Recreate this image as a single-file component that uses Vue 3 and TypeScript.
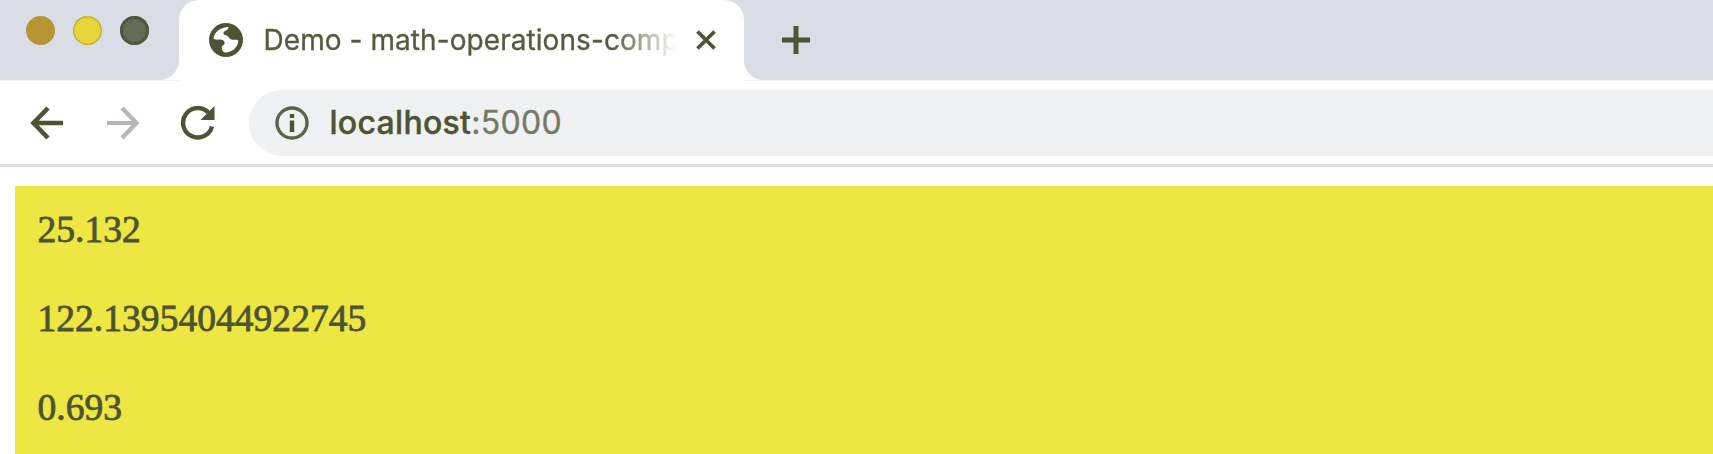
<script setup lang="ts">
const results: string[] = ['25.132', '122.13954044922745', '0.693']
const lights: string[] = ['close', 'minimize', 'zoom']
</script>

<template>
  <div class="browser">
    <header class="tab-strip">
      <div class="lights">
        <i v-for="light in lights" :key="light" class="light" :class="light"></i>
      </div>
      <div class="tab">
        <svg class="globe" viewBox="0 0 34 34">
          <circle cx="17" cy="17" r="17" fill="#4c5432" />
          <path d="M19.500 4C12 4 5 9 4.500 15.500C6.500 17.500 9 16.200 11.500 16.500C14.500 17 16 18 15.500 20.500C15 22.500 12.500 22.500 12.800 24.500C13.200 27 13.500 29.500 17 29.500C23 29 28 25.500 29.500 18C28.500 15.800 26 17 23.500 16.800C20.500 16.500 20 13.500 17.500 12.500C15.500 11.500 14 11.500 14.500 9.500C15.500 7 19.500 8 19.500 4Z" fill="#fff" />
        </svg>
        <span class="title">Demo - math-operations-comp</span>
        <svg class="close-tab" viewBox="0 0 20 20">
          <path d="M1.500 1.500L18.500 18.500M18.500 1.500L1.500 18.500" fill="none" stroke="#4c5432" stroke-width="3.800" />
        </svg>
      </div>
      <svg class="new-tab" viewBox="0 0 30 30">
        <path d="M15 1V29M1 15H29" fill="none" stroke="#4c5432" stroke-width="5" />
      </svg>
    </header>
    <nav class="toolbar">
      <svg class="nav-icon back" viewBox="0 0 34 34">
        <path d="M33 17H4M18 2L3.500 17L18 32" fill="none" stroke="#4c5432" stroke-width="4.600" />
      </svg>
      <svg class="nav-icon forward" viewBox="0 0 34 34">
        <path d="M1 17H30M16 2L30.500 17L16 32" fill="none" stroke="#b4b6be" stroke-width="4.200" />
      </svg>
      <svg class="nav-icon reload" viewBox="0 0 34 34">
        <path d="M31 20.500A14.700 14.700 0 1 1 27.400 6.600" fill="none" stroke="#4c5432" stroke-width="4.400" />
        <path d="M33.500 0V14H19.500Z" fill="#4c5432" />
      </svg>
      <div class="address">
        <svg class="info" viewBox="0 0 34 34">
          <circle cx="17" cy="17" r="15" fill="none" stroke="#5c634a" stroke-width="3.400" />
          <path d="M17 8V12M17 14.500V26" fill="none" stroke="#4c5432" stroke-width="4.400" />
        </svg>
        <span class="url"><span class="host">localhost</span><span class="port">:5000</span></span>
      </div>
    </nav>
    <main class="page">
      <section class="results">
        <p v-for="result in results" :key="result">{{ result }}</p>
      </section>
    </main>
  </div>
</template>

<style>
body {
  margin: 0;
  overflow: hidden;
}
</style>

<style scoped>
.browser {
  width: 1713px;
  height: 454px;
  overflow: hidden;
  background: #fff;
  display: flex;
  flex-direction: column;
}
.tab-strip {
  flex: none;
  display: flex;
  height: 80px;
  background: #dadde6;
  border-bottom: 1px solid #f1f3f5;
}
.lights {
  display: flex;
  gap: 18px;
  width: 153.5px;
  padding: 16px 0 0 25.5px;
}
.light {
  width: 29px;
  height: 29px;
  border-radius: 50%;
}
.close {
  background: #b69535;
}
.minimize {
  background: #e4d63b;
  box-shadow: inset 0 0 0 1.5px #c9b136;
}
.zoom {
  background: #636a55;
  box-shadow: inset 0 0 0 3px #50583b;
}
.tab {
  position: relative;
  flex: none;
  display: flex;
  align-items: center;
  box-sizing: border-box;
  width: 564.5px;
  height: 81px;
  padding: 0 0 1px 30px;
  border-radius: 20px 20px 0 0;
  background: #fff;
}
.tab::before,
.tab::after {
  content: '';
  position: absolute;
  bottom: 1px;
  width: 20px;
  height: 20px;
}
.tab::before {
  left: -20px;
  background: radial-gradient(circle at 0 0, transparent 19.5px, #fff 20.5px);
}
.tab::after {
  right: -20px;
  background: radial-gradient(circle at 100% 0, transparent 19.5px, #fff 20.5px);
}
.globe {
  width: 34px;
  height: 34px;
}
.title {
  width: 412px;
  margin-left: 20.5px;
  white-space: nowrap;
  font: 400 28px/40px Inter, sans-serif;
  letter-spacing: 0.07px;
  color: #555c3e;
  -webkit-text-stroke: 0.35px #555c3e;
  mask-image: linear-gradient(to right, #000 350px, transparent 412px);
}
.close-tab {
  width: 20px;
  height: 20px;
  margin-left: 20px;
}
.new-tab {
  width: 30px;
  height: 30px;
  margin: 25px 0 0 37px;
}
.toolbar {
  flex: none;
  display: flex;
  align-items: center;
  height: 83px;
  padding-left: 30px;
  border-bottom: 3px solid #dadde6;
}
.nav-icon {
  flex: none;
  width: 34px;
  height: 34px;
}
.forward {
  margin-left: 42px;
}
.reload {
  margin-left: 41px;
}
.address {
  flex: 1;
  display: flex;
  align-items: center;
  height: 66px;
  margin-left: 34px;
  padding-left: 26px;
  border-radius: 33px 0 0 33px;
  background: #f0f1f3;
}
.info {
  width: 34px;
  height: 34px;
}
.url {
  margin-left: 20.5px;
  font: 400 32px/44px Inter, sans-serif;
  letter-spacing: 0.3px;
  white-space: nowrap;
}
.host {
  font-weight: 500;
  color: #4c5432;
  -webkit-text-stroke: 0.4px #4c5432;
}
.port {
  color: #747a66;
  -webkit-text-stroke: 0.4px #747a66;
}
.page {
  flex: none;
  padding: 19px 0 0 14.5px;
}
.results {
  height: 270px;
  padding: 21.7px 0 0 23px;
  background: #eee643;
  color: #4c5432;
}
.results p {
  margin: 0 0 45.300px;
  font: 37.600px/44px "Liberation Serif", serif;
  -webkit-text-stroke: 0.8px #4c5432;
}
</style>
